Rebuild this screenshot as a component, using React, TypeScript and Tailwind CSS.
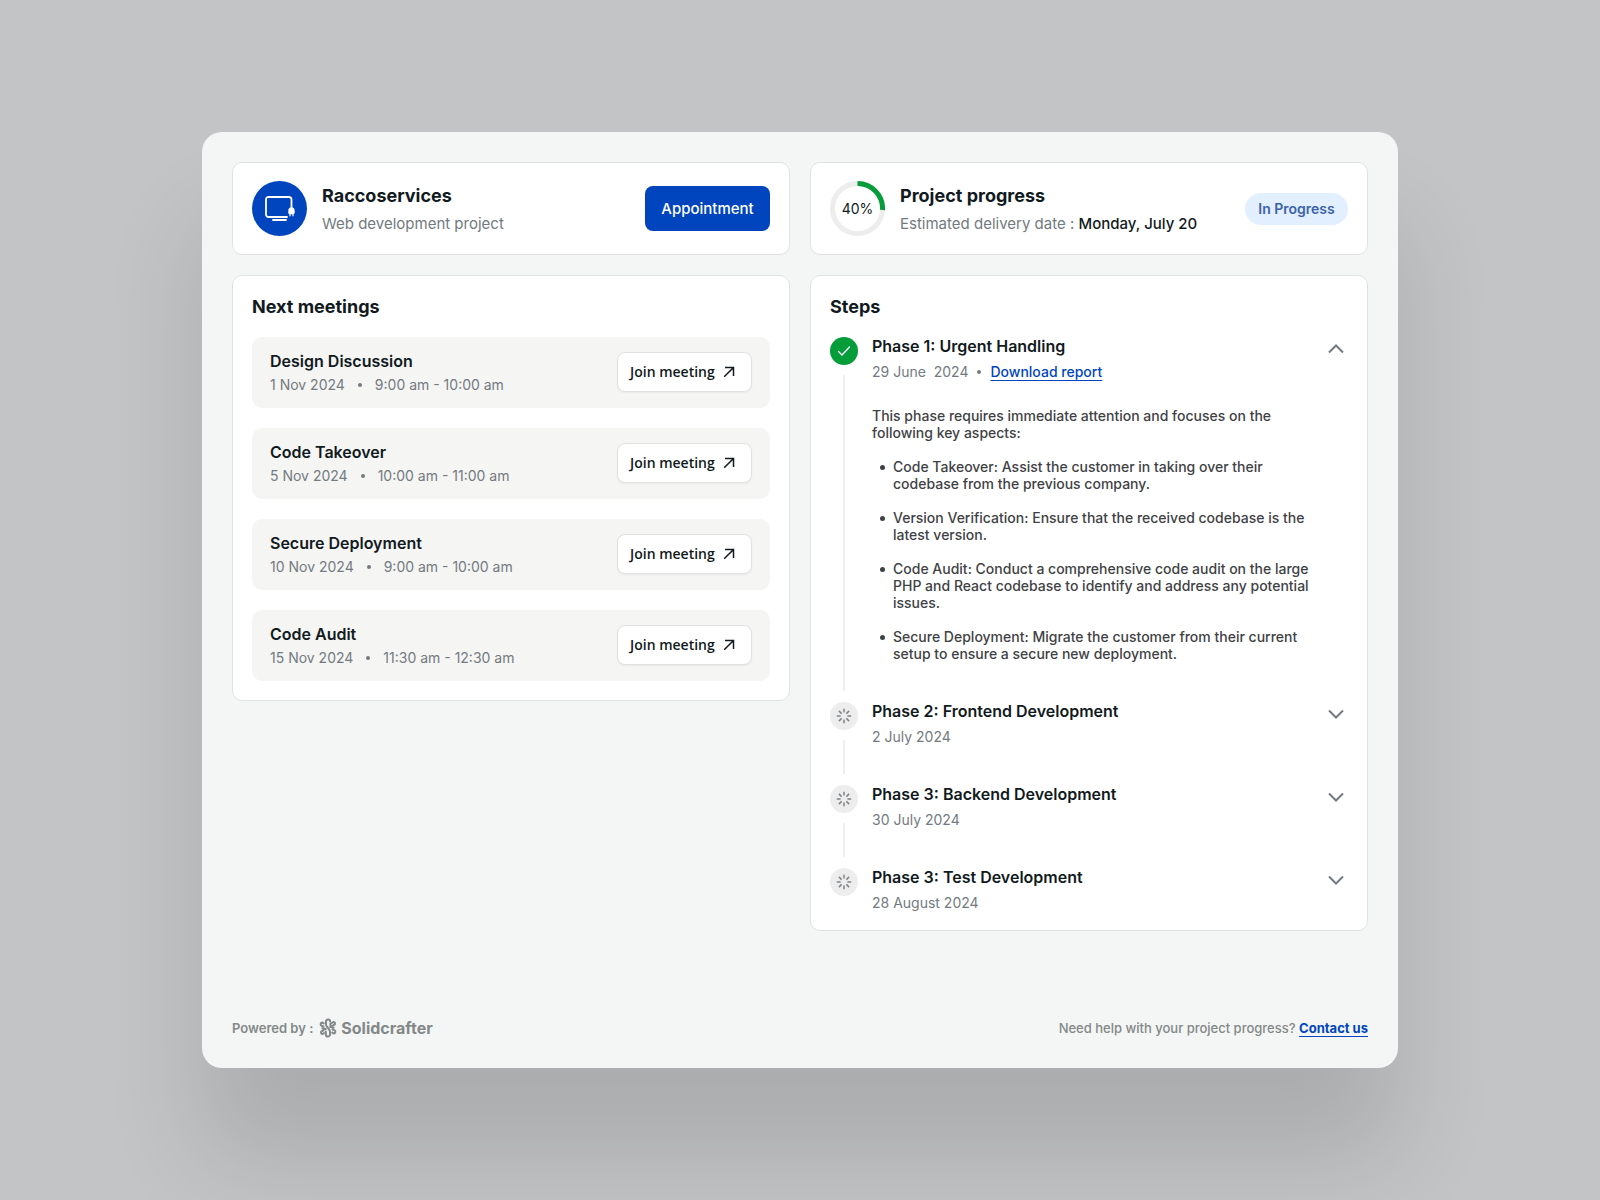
import { useState } from "react";

interface Meeting {
  title: string;
  date: string;
  time: string;
}

interface Step {
  title: string;
  date: string;
  done?: boolean;
  intro?: string;
  points?: string[];
}

const meetings: Meeting[] = [
  { title: "Design Discussion", date: "1 Nov 2024", time: "9:00 am - 10:00 am" },
  { title: "Code Takeover", date: "5 Nov 2024", time: "10:00 am - 11:00 am" },
  { title: "Secure Deployment", date: "10 Nov 2024", time: "9:00 am - 10:00 am" },
  { title: "Code Audit", date: "15 Nov 2024", time: "11:30 am - 12:30 am" },
];

const steps: Step[] = [
  {
    title: "Phase 1: Urgent Handling",
    date: "29 June\u00a0 2024",
    done: true,
    intro: "This phase requires immediate attention and focuses on the following key aspects:",
    points: [
      "Code Takeover: Assist the customer in taking over their codebase from the previous company.",
      "Version Verification: Ensure that the received codebase is the latest version.",
      "Code Audit: Conduct a comprehensive code audit on the large PHP and React codebase to identify and address any potential issues.",
      "Secure Deployment: Migrate the customer from their current setup to ensure a secure new deployment.",
    ],
  },
  { title: "Phase 2: Frontend Development", date: "2 July 2024" },
  { title: "Phase 3: Backend Development", date: "30 July 2024" },
  { title: "Phase 3: Test Development", date: "28 August 2024" },
];

const card = "rounded-[10px] border border-[#e0e2e2] bg-white px-[19px]";

function ScreenIcon() {
  return (
    <svg viewBox="0 0 30 26" className="h-[26px] w-[30px]" fill="none" stroke="white" strokeWidth="1.800" strokeLinecap="round" strokeLinejoin="round">
      <path d="M22 21H3.500A2.500 2.500 0 0 1 1 18.500V3.500A2.500 2.500 0 0 1 3.500 1H24a2.500 2.500 0 0 1 2.500 2.500V12" />
      <path d="M8 24h13" />
      <path d="M23.600 17v-2.500a2.900 2.900 0 0 1 5.800 0V17l-1 1h-3.800z" fill="white" strokeWidth="0.600" />
      <path d="M25 17.500v2.300M28 17.500v2.300" strokeWidth="1.200" />
    </svg>
  );
}

function ArrowIcon() {
  return (
    <svg viewBox="0 0 12 12" className="size-3" fill="none" stroke="currentColor" strokeWidth="1.500">
      <path d="M1.200 10.800 10.500 1.500M2 1.500h8.500V10" />
    </svg>
  );
}

function ChevronIcon({ open }: { open: boolean }) {
  return (
    <svg viewBox="0 0 16 10" className="h-[10px] w-4" fill="none" stroke="#737a80" strokeWidth="2">
      <path d={open ? "M1 8.500 8 1.500l7 7" : "M1 1.500l7 7 7-7"} />
    </svg>
  );
}

function CheckIcon() {
  return (
    <svg viewBox="0 0 14 12" className="h-3 w-[14px]" fill="none" stroke="white" strokeWidth="1.300" strokeLinecap="round" strokeLinejoin="round">
      <path d="M1.500 6.500 5 10l7.500-8" />
    </svg>
  );
}

function LoaderIcon() {
  return (
    <svg viewBox="0 0 16 16" className="size-4" stroke="#7f8488" strokeWidth="1.500">
      <path d="M8 .8V4.600M8 11.400v3.800M.8 8H4.600M11.400 8h3.800M2.900 2.900l2.700 2.700M10.400 10.400l2.700 2.700M2.900 13.100l2.700-2.700M10.400 5.600l2.700-2.700" />
    </svg>
  );
}

function SolidcrafterLogo() {
  return (
    <svg viewBox="0 0 18 20" className="h-5 w-[18px]" fill="none" stroke="#838888" strokeWidth="2" strokeLinecap="round" strokeLinejoin="round">
      <path d="M11.200 3.600A2.100 2.100 0 0 0 7 3.600V6.200q0 1 .6 1.900l2.800 3.800q.6.900.6 1.900v2.600a2.100 2.100 0 0 1-4.200 0V13.500" />
      <path d="M4.500 8.400 2.400 7.700A1.700 1.700 0 0 1 3.600 4.600L4.800 5.500M6.800 11 3.300 10.300M4.600 12.200 2.200 13.600A1.600 1.600 0 0 0 3.600 16L5 15" />
      <path d="M13.500 11.600 15.600 12.300A1.700 1.700 0 0 1 14.400 15.400L13.200 14.500M11.200 9 14.700 9.700M13.400 7.800 15.800 6.400A1.600 1.600 0 0 0 14.400 4L11.400 5.700V7.800" />
    </svg>
  );
}

function ProgressRing() {
  return (
    <div className="relative flex size-[55px] shrink-0 items-center justify-center">
      <svg viewBox="0 0 55 55" className="absolute inset-0 size-full" fill="none" strokeWidth="5">
        <circle cx="27.500" cy="27.500" r="25" stroke="#ededed" />
        <path d="M27.500 2.500A25 25 0 0 1 52.500 29" stroke="#059c3a" />
      </svg>
      <span className="relative text-sm">40%</span>
    </div>
  );
}

function Meetings() {
  return (
    <section className={`${card} pt-[19px] pb-[19px]`}>
      <h2 className="text-lg leading-6 font-bold">Next meetings</h2>
      <ul className="mt-[18px] flex flex-col gap-5">
        {meetings.map((m) => (
          <li key={m.title} className="flex h-[71px] items-center justify-between rounded-[10px] bg-[#f5f5f4] px-[18px]">
            <div>
              <h3 className="text-base leading-6 font-semibold">{m.title}</h3>
              <p className="flex items-center text-sm leading-6 text-[#737a80]">
                {m.date}
                <span className="mx-[13px] size-1 rounded-full bg-[#737a80]" />
                {m.time}
              </p>
            </div>
            <button className="mb-px flex h-10 w-[135px] items-center justify-start gap-2 rounded-lg border border-[#e0e2e2] bg-white pl-3 font-['Open_Sans',sans-serif] text-sm font-semibold shadow-xs">
              Join meeting
              <ArrowIcon />
            </button>
          </li>
        ))}
      </ul>
    </section>
  );
}

function Steps() {
  const [open, setOpen] = useState<number | null>(0);

  return (
    <section className={`${card} pt-[19px] pb-[17px]`}>
      <h2 className="text-lg leading-6 font-bold">Steps</h2>
      <ol className="mt-[18px]">
        {steps.map((s, i) => {
          const last = i === steps.length - 1;
          return (
            <li key={s.title} className="flex gap-[14px]">
              <div className="flex w-7 flex-col items-center">
                <span className={`flex size-7 shrink-0 items-center justify-center rounded-full ${s.done ? "bg-[#059c3a]" : "bg-[#ededed]"}`}>
                  {s.done ? <CheckIcon /> : <LoaderIcon />}
                </span>
                {!last && <span className="mt-[10px] mb-[11px] w-[2px] grow bg-[#efefef]" />}
              </div>
              <div className={`grow ${last ? "" : "pb-[38px]"}`}>
                <div className="flex items-start justify-between">
                  <div>
                    <h3 className="text-base leading-[18px] font-semibold">{s.title}</h3>
                    <p className="mt-[7px] flex items-center text-sm leading-5 text-[#737a80]">
                      {s.date}
                      {s.done && (
                        <>
                          <span className="mx-[9px] size-1 rounded-full bg-[#737a80]" />
                          <a href="#report" className="font-medium text-[#0045bd] underline underline-offset-3">Download report</a>
                        </>
                      )}
                    </p>
                  </div>
                  <button
                    aria-label={`Toggle ${s.title}`}
                    aria-expanded={open === i}
                    onClick={() => setOpen(open === i ? null : i)}
                    className="flex size-6 items-center justify-center"
                  >
                    <ChevronIcon open={open === i} />
                  </button>
                </div>
                {open === i && s.intro && (
                  <div className="mt-[25px] mr-9 pb-[2px] text-sm leading-[17px] font-medium text-[#3f4245]">
                    <p>{s.intro}</p>
                    <ul className="mt-[17px] flex flex-col gap-[17px] pl-2">
                      {s.points?.map((p) => (
                        <li key={p} className="flex gap-2">
                          <span className="mt-[7px] size-[5px] shrink-0 rounded-full bg-[#3f4245]" />
                          <span>{p}</span>
                        </li>
                      ))}
                    </ul>
                  </div>
                )}
              </div>
            </li>
          );
        })}
      </ol>
    </section>
  );
}

export default function App() {
  return (
    <div className="flex min-h-screen items-center justify-center bg-[#c3c4c6] font-['Inter',sans-serif] text-[#111a20]">
      <main className="flex min-h-[936px] w-full max-w-[1196px] flex-col rounded-[20px] bg-[#f4f6f5] px-[30px] pt-[30px] pb-7 shadow-[0_90px_100px_rgba(0,0,0,0.12)]">
        <div className="grid grid-cols-2 items-start gap-5">
          <header className={`${card} flex items-center py-[18px]`}>
            <div className="flex size-[55px] shrink-0 items-center justify-center rounded-full bg-[#0045bd]">
              <ScreenIcon />
            </div>
            <div className="ml-[15px] grow pt-[2px]">
              <h1 className="text-lg leading-6 font-bold">Raccoservices</h1>
              <p className="mt-1 text-[15px] leading-6 text-[#737a80]">Web development project</p>
            </div>
            <button className="h-[45px] w-[125px] rounded-lg bg-[#0045bd] pt-px text-[15px] font-medium text-white">Appointment</button>
          </header>

          <section className={`${card} flex items-center py-[18px]`}>
            <ProgressRing />
            <div className="ml-[15px] grow pt-[2px]">
              <h2 className="text-lg leading-6 font-bold">Project progress</h2>
              <p className="mt-1 text-[15px] leading-6 text-[#737a80]">
                Estimated delivery date : <span className="font-medium text-[#111a20]">Monday, July 20</span>
              </p>
            </div>
            <span className="flex h-8 w-[103px] items-center justify-center rounded-full bg-[#e2efff] text-sm font-semibold text-[#3c62a8]">In Progress</span>
          </section>

          <Meetings />
          <Steps />
        </div>

        <footer className="mt-auto flex items-center justify-between text-[13px] leading-[18px] font-medium text-[#838888]">
          <div className="flex items-center">
            <span className="font-semibold">Powered by :</span>
            <span className="ml-[6px] flex items-center gap-1 text-base font-bold">
              <SolidcrafterLogo />
              Solidcrafter
            </span>
          </div>
          <p>
            Need help with your project progress?{" "}
            <a href="#contact" className="font-bold text-[#0045bd] underline underline-offset-3">Contact us</a>
          </p>
        </footer>
      </main>
    </div>
  );
}
